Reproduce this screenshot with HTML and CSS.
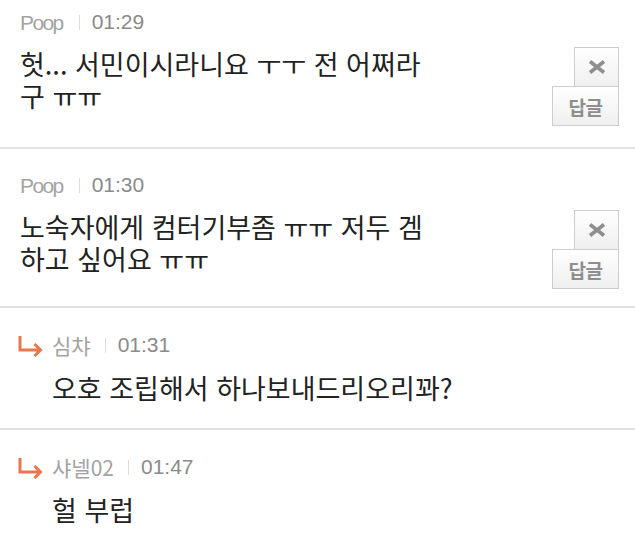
FILE: index.html
```html
<!DOCTYPE html>
<html lang="ko">
<head>
    <meta charset="UTF-8">
    <meta name="viewport" content="width=device-width, initial-scale=1.0">
    <title>댓글</title>
    <link rel="stylesheet" href="styles.css">
</head>
<body>

<ul class="comment-list">
    <li class="comment">
        <div class="comment-main">
            <div class="meta">
                <span class="nick">Poop</span>
                <span class="time">01:29</span>
            </div>
            <p class="text">헛... 서민이시라니요 ㅜㅜ 전 어쩌라구 ㅠㅠ</p>
        </div>
        <div class="comment-btns">
            <button class="btn-del" type="button" title="삭제">
                <svg width="18" height="14" viewBox="0 0 18 14"><path d="M2 1.5 L16 12.5 M16 1.5 L2 12.5" stroke="#8e8e8e" stroke-width="3.6" stroke-linecap="butt"/></svg>
            </button>
            <button class="btn-reply" type="button">답글</button>
        </div>
    </li>
    <li class="comment">
        <div class="comment-main">
            <div class="meta">
                <span class="nick">Poop</span>
                <span class="time">01:30</span>
            </div>
            <p class="text">노숙자에게 컴터기부좀 ㅠㅠ 저두 겜 하고 싶어요 ㅠㅠ</p>
        </div>
        <div class="comment-btns">
            <button class="btn-del" type="button" title="삭제">
                <svg width="18" height="14" viewBox="0 0 18 14"><path d="M2 1.5 L16 12.5 M16 1.5 L2 12.5" stroke="#8e8e8e" stroke-width="3.6" stroke-linecap="butt"/></svg>
            </button>
            <button class="btn-reply" type="button">답글</button>
        </div>
    </li>
    <li class="comment reply">
        <div class="comment-main">
            <div class="meta">
                <svg class="reply-arrow" width="25" height="23" viewBox="0 0 25 23"><path d="M2 0 V14 H22 M16.5 8 L22.5 14 L16.5 20" fill="none" stroke="#e9774f" stroke-width="3"/></svg>
                <span class="nick ko">심챠</span>
                <span class="time">01:31</span>
            </div>
            <p class="text">오호 조립해서 하나보내드리오리꽈?</p>
        </div>
    </li>
    <li class="comment reply">
        <div class="comment-main">
            <div class="meta">
                <svg class="reply-arrow" width="25" height="23" viewBox="0 0 25 23"><path d="M2 0 V14 H22 M16.5 8 L22.5 14 L16.5 20" fill="none" stroke="#e9774f" stroke-width="3"/></svg>
                <span class="nick ko">샤넬02</span>
                <span class="time">01:47</span>
            </div>
            <p class="text">헐 부럽</p>
        </div>
    </li>
</ul>

</body>
</html>
```

FILE: styles.css
```css
body {
    margin: 0;
    background: #fff;
    font-family: "Noto Sans CJK KR", "Noto Sans", sans-serif;
    color: #222;
}
.comment-list {
    list-style: none;
    margin: 0;
    padding: 0;
}
.comment {
    display: flex;
    align-items: flex-start;
    padding: 24px 16px 17px 20px;
    border-bottom: 2px solid #e2e2e2;
}
.comment:first-child {
    padding-top: 10px;
    padding-bottom: 21px;
}
.comment-main {
    flex: 1;
}
.meta {
    display: flex;
    align-items: center;
    height: 24px;
    font-family: "Liberation Sans", Arial, sans-serif;
    font-size: 21px;
}
.nick {
    color: #a3a3a3;
    letter-spacing: -1.6px;
    padding-right: 16px;
    border-right: 1px solid #dcdcdc;
    line-height: 15px;
}
.nick.ko {
    font-family: "Noto Sans CJK KR", sans-serif;
    letter-spacing: 0;
    padding-right: 14px;
}
.time {
    color: #8a8a8a;
    margin-left: 12px;
}
.text {
    margin: 14px 0 0;
    max-width: 415px;
    font-size: 27px;
    line-height: 32px;
}
.comment-btns {
    display: flex;
    flex-direction: column;
    align-items: flex-end;
    margin-top: 37px;
}
.comment-btns button {
    box-sizing: border-box;
    display: flex;
    align-items: center;
    justify-content: center;
    padding: 0;
    border: 1px solid #cdcdcd;
    background: linear-gradient(#ffffff, #efefef);
    font-family: "Noto Sans CJK KR", sans-serif;
    cursor: pointer;
}
.btn-del {
    width: 45px;
    height: 40px;
}
.btn-reply {
    width: 67px;
    height: 40px;
    margin-top: -1px;
    font-size: 19px;
    font-weight: bold;
    color: #8e8e8e;
    letter-spacing: -0.5px;
}
.reply {
    padding-top: 25px;
    padding-bottom: 24px;
}
.reply .meta {
    margin-left: -2px;
}
.reply-arrow {
    margin-right: 9px;
    margin-top: 4px;
}
.reply .text {
    padding-left: 32px;
    margin-top: 15px;
}
```
